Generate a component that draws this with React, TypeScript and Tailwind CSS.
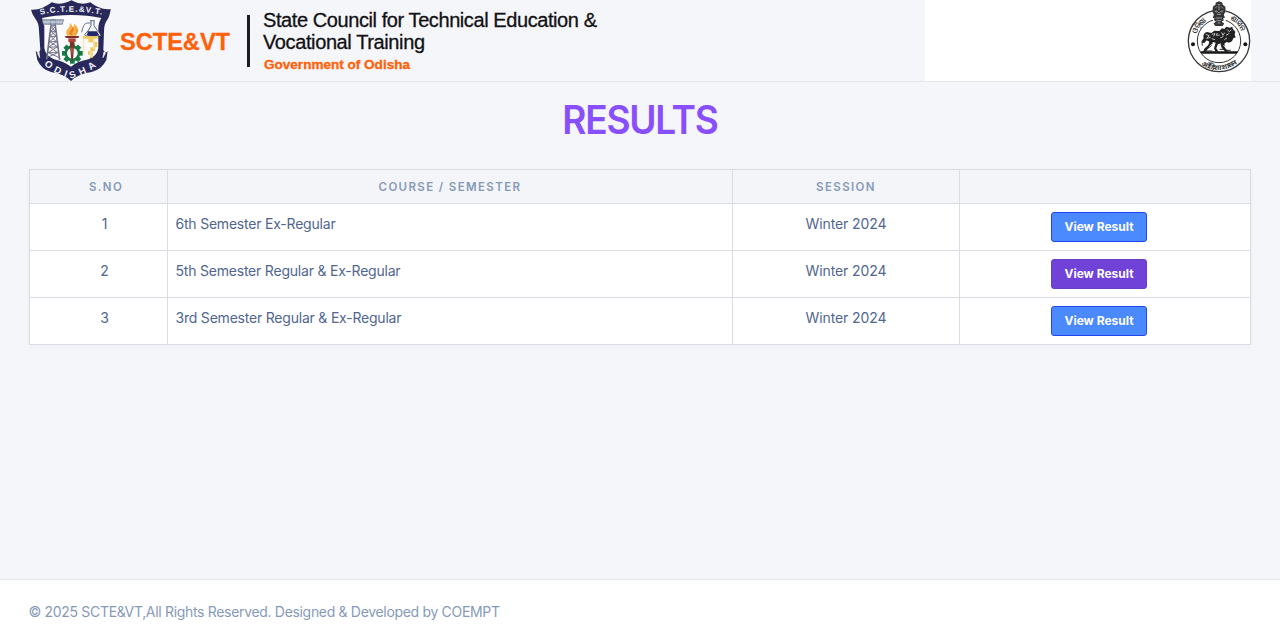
import React from "react";

const rows = [
  { n: "1", course: "6th Semester Ex-Regular", session: "Winter 2024", active: false },
  { n: "2", course: "5th Semester Regular & Ex-Regular", session: "Winter 2024", active: true },
  { n: "3", course: "3rd Semester Regular & Ex-Regular", session: "Winter 2024", active: false },
];

const TEETH = [0, 45, 90, 135, 180, 225, 270, 315];

function Crest() {
  return (
    <svg width="86" height="81" viewBox="27 0 258 243" className="block shrink-0" aria-label="SCTE&amp;VT crest">
      <path
        d="M33 29 Q66 31 95 7 Q122 18 154 1 Q184 18 211 7 Q240 31 272 27 Q270 48 261 61 Q252 72 252 95 L250 150 Q257 163 263 153 L259 180 Q246 208 215 216 Q173 222 153 243 Q130 221 93 216 Q64 208 52 180 L47 153 Q56 163 61 150 L57 92 Q57 69 46 56 Q36 43 33 29Z"
        fill="#29285b"
      />
      <path d="M66 54 Q105 45 154 45 Q203 45 244 54 Q234 70 235 90 V145 Q231 168 206 178 Q172 184 153 200 Q130 184 102 178 Q77 168 73 145 V91 Q74 70 66 54Z" fill="#fbfbfd" />
      <path d="M52 158l7 15-2-18M257 158l-8 15 3-18" fill="#fff" stroke="#fff" strokeWidth="2" />
      <path id="crest-top" d="M61 44 Q106 35 154 35 Q201 35 250 45" fill="none" />
      <path id="crest-base" d="M69 190 Q92 218 151 236 Q212 220 241 186" fill="none" />
      <text fill="#f2f2fa" fontFamily="Liberation Sans, Arial, sans-serif" fontWeight="700" fontSize="24">
        <textPath href="#crest-top" textLength="186">S.C.T.E.&amp;V.T.</textPath>
      </text>
      <text fill="#f2f2fa" fontFamily="Liberation Sans, Arial, sans-serif" fontWeight="700" fontSize="29">
        <textPath href="#crest-base" startOffset="4" textLength="178">ODISHA</textPath>
      </text>
      <g fill="none" stroke="#717184" strokeWidth="4">
        <path d="M94 69 L80 178 M105 69 L119 180" strokeWidth="5" />
        <path d="M94 80l12 14-15 14 18 17-21 15 25 18-30 14M106 80L93 94l15 14-19 17 23 15-27 18 33 15" strokeWidth="3" />
        <path d="M91 94h18M89 109h22M87 125h26M86 141h29M83 158h34" strokeWidth="3" />
      </g>
      <path d="M67 59h64l-4 14h-20q-8 13-17 0H70Z" fill="#a3adbd" stroke="#6c758b" strokeWidth="2" />
      <circle cx="99" cy="67" r="9" fill="#9ca9bd" stroke="#62708a" strokeWidth="2" />
      <path d="M69 66h60" stroke="#f5f6fa" strokeWidth="2" />
      <path d="M141 107 Q135 93 144 86 Q151 80 150 69 Q157 74 158 83 Q164 79 162 71 Q180 84 173 97 L168 108Z" fill="#f5b44b" />
      <path d="M150 105 Q145 96 152 91 Q159 86 158 78 Q166 91 158 96 Q154 101 159 106Z" fill="#ef8128" />
      <path d="M164 103 Q174 96 168 87" fill="none" stroke="#e9952c" strokeWidth="4" />
      <path d="M134 108h44l-3 6h-37Z" fill="#7c302b" />
      <path d="M145 115h22v11h-22Z" fill="#ac4336" />
      <g fill="#167845">
        {TEETH.map((a) => (
          <rect key={a} x="150" y="129" width="14" height="13" transform={`rotate(${a} 157 160)`} />
        ))}
      </g>
      <circle cx="157" cy="160" r="20" fill="#fafbfb" stroke="#167845" strokeWidth="8" />
      <path d="M149 126h14l-4 55h-5Z" fill="#7d302a" />
      <path d="M151 143l5 23 6-23Z" fill="#b34c3e" />
      <path d="M229 61v16L220 93q-16 14-6 15h40q9 0-5-15l-11-16V61" transform="translate(-16 0)" fill="#f6f7fb" stroke="#5a6484" strokeWidth="3" />
      <path d="M204 94h26l8 12q-20 6-38 0Z" fill="#202868" />
      <path d="M210 62h14M211 69h-9q-12 0-17 28" fill="none" stroke="#6b728a" strokeWidth="3" />
      <path d="M188 109h45v7h-13v9h12v17h-7v11h-7v21h-8v-10h-6v-10h7v-12h8v-15h-14v-11h-17Z" fill="#f4c85b" />
      <path d="M191 116v45M222 116v32M213 153v18" stroke="#f9e6ac" strokeWidth="4" />
    </svg>
  );
}

function StateEmblem() {
  return (
    <svg width="66" height="74" viewBox="45 0 198 222" className="block" aria-label="Odisha state emblem">
      <g fill="none" stroke="#373737">
        <circle cx="147" cy="123" r="92" strokeWidth="4" />
        <circle cx="147" cy="123" r="65" strokeWidth="3" />
      </g>
      <rect x="129" y="18" width="38" height="58" fill="#fff" />
      <path d="M139 9l8-3 8 3 2 7 7 5 1 14-6 8 3 9h-5l2 8-7 5 8 6-3 5h-20l-4-5 8-6-7-6 2-7h-5l3-9-5-9 2-13 7-5Z" fill="#353535" stroke="#353535" strokeWidth="4" />
      <path d="M136 24l5-5M143 14h8M154 20l5 5M134 33l7 4M153 37l7-5M147 18v12M141 43h12M137 54h19M139 62h15M143 69h8" stroke="#cfcfcf" strokeWidth="2" />
      <path d="M139 31l8 8 8-8" fill="none" stroke="#aaa" strokeWidth="2" />
      <circle cx="69" cy="133" r="6" fill="#161616" />
      <circle cx="226" cy="133" r="6" fill="#161616" />
      <path id="seal-left" d="M79 101 Q89 75 119 56" fill="none" />
      <path id="seal-right" d="M179 56 Q208 72 220 103" fill="none" />
      <path id="seal-base" d="M86 190 Q144 232 208 187" fill="none" />
      <g fill="#333" fontFamily="Noto Sans, sans-serif" fontSize="23" fontWeight="700">
        <text><textPath href="#seal-left" textLength="52">ଓଡ଼ିଶା</textPath></text>
        <text><textPath href="#seal-right" textLength="56">ଶାସନ</textPath></text>
        <text fontSize="22"><textPath href="#seal-base" startOffset="9" textLength="116">ओड़िशा शासन</textPath></text>
      </g>
      <path d="M91 154h113l-4 7H95Z" fill="#171717" />
      <path d="M101 116q-4-17 10-20l13 3 9-7 15 1 8-8 7 2 6-7 10 3 8-3 2 8 7 7-2 9 3 8-7 3-4 9-9 4-7-2-7 5 2 12 10 12-8 2-12-14-4-12-7 1-5 13 7 10h-10l-4-10 5-17-8-2-5 12-13 11-4 10h-9l5-13 12-11 3-10-8-4-7 8-7-1 3-10Z" fill="#222" />
      <path d="M107 103l11 4-8 8 12-3M125 103l10-2-4 8M142 99l-3 7 10-1M155 97l4 9 5-8M171 88l8 8M168 106l10-6M184 89l-5 5M125 116l10 3M151 113l9-3M163 119l8-5M126 132l-8 8M152 130l-5 9M160 136l5 5" fill="none" stroke="#ddd" strokeWidth="2.5" />
      <path d="M104 114l-8 9 1 14M149 148h13M110 153h17M166 151h16" stroke="#222" strokeWidth="3" fill="none" />
    </svg>
  );
}

function Header() {
  return (
    <header className="flex h-[82px] shrink-0 items-start justify-between border-b border-[#e3e6ec] px-[29px] font-['Liberation_Sans',Arial,sans-serif]">
      <div className="flex h-[81px]">
        <Crest />
        <svg width="490" height="81" viewBox="115 0 490 81" className="block shrink-0" fontFamily="Liberation Sans, Arial, sans-serif">
          <text x="120" y="49.5" fontSize="24" fontWeight="700" fill="#ff6108" stroke="#ff6108" strokeWidth=".3" textLength="110" lengthAdjust="spacingAndGlyphs">SCTE&amp;VT</text>
          <rect x="247" y="15" width="3" height="52" fill="#1d1d20" />
          <g fill="#111114" stroke="#111114" strokeWidth=".3" fontSize="20">
            <text x="263" y="27" textLength="334">State Council for Technical Education &amp;</text>
            <text x="263" y="48.5" textLength="162">Vocational Training</text>
          </g>
          <text x="264" y="69" fontSize="13.5" fontWeight="700" fill="#ff6108" stroke="#ff6108" strokeWidth=".3" textLength="146" lengthAdjust="spacingAndGlyphs">Government of Odisha</text>
        </svg>
      </div>
      <div className="flex h-[81px] w-[326px] justify-end bg-white">
        <StateEmblem />
      </div>
    </header>
  );
}

export default function App() {
  return (
    <div className="flex h-[643px] flex-col bg-[#f5f6fa] font-[Inter,sans-serif] text-[#506690]">
      <Header />
      <main className="flex-1 px-[29px]">
        <h1 className="mt-[13px] scale-x-[0.95] text-center text-[39px] leading-[49px] font-semibold tracking-[-1.3px] text-[#884fff]">RESULTS</h1>
        <table className="mt-[25px] w-[1222px] table-fixed border-separate border-spacing-0 border-t border-l border-[#dadce0] bg-white shadow-[0_2px_5px_rgba(30,40,80,0.04)]">
          <colgroup>
            <col className="w-[138px]" />
            <col className="w-[565px]" />
            <col className="w-[227px]" />
            <col className="w-[291px]" />
          </colgroup>
          <thead>
            <tr className="h-[34px] bg-[#f4f5f9] text-[11.5px] leading-[16px] font-semibold tracking-[1.38px] text-[#869ab8]">
              <th className="border-r border-b border-[#dadce0] p-0 pl-[15px] font-semibold">S.NO</th>
              <th className="border-r border-b border-[#dadce0] p-0 font-semibold">COURSE / SEMESTER</th>
              <th className="border-r border-b border-[#dadce0] p-0 font-semibold">SESSION</th>
              <th className="border-r border-b border-[#dadce0] p-0" />
            </tr>
          </thead>
          <tbody>
            {rows.map((r) => (
              <tr key={r.n} className="h-[47px] text-[14px] leading-[21px]">
                <td className="border-r border-b border-[#dadce6] p-0 pt-[9px] pl-3 text-center align-top">{r.n}</td>
                <td className="border-r border-b border-[#dadce6] p-0 pt-[9px] pl-[7.5px] align-top tracking-[-0.21px]">{r.course}</td>
                <td className="border-r border-b border-[#dadce6] p-0 pt-[9px] text-center align-top tracking-[-0.1px]">{r.session}</td>
                <td className="border-r border-b border-[#dadce6] p-0 pt-2 pr-[12px] text-center align-top">
                  <button
                    className={`mx-auto block h-[30px] w-24 rounded-[3px] border text-[12px] leading-[28px] font-bold whitespace-nowrap text-white ${
                      r.active ? "border-[#683dca] bg-[#7042d8]" : "border-[#1e46f5] bg-[#4b89ff]"
                    }`}
                  >
                    View Result
                  </button>
                </td>
              </tr>
            ))}
          </tbody>
        </table>
      </main>
      <footer className="flex h-16 shrink-0 items-center border-t border-[#e3e6ec] bg-white px-[28.5px] pb-px text-[14px] leading-[21px] tracking-[-0.32px] text-[#869ab8]">
        © 2025 SCTE&amp;VT,All Rights Reserved. Designed &amp; Developed by COEMPT
      </footer>
    </div>
  );
}
